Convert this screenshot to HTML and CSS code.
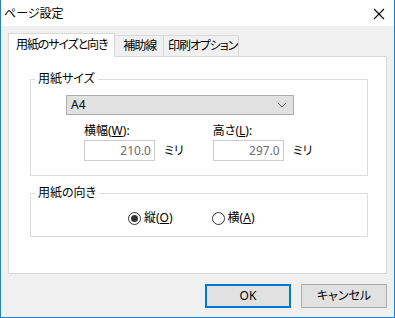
FILE: index.html
```html
<!DOCTYPE html>
<html lang="ja">
<head>
  <meta charset="UTF-8">
  <title>ページ設定</title>
  <link rel="stylesheet" href="styles.css">
</head>
<body>
  <div class="window">
    <div class="titlebar">
      <span class="title">ページ設定</span>
      <svg class="close" width="12" height="12" viewBox="0 0 12 12">
        <path d="M1 1 L11 11 M11 1 L1 11" stroke="#000" stroke-width="1.1" fill="none"/>
      </svg>
    </div>

    <div class="content">
      <div class="tabs">
        <div class="tab active">用紙のサイズと向き</div>
        <div class="tab">補助線</div>
        <div class="tab">印刷オプション</div>
      </div>

      <div class="panel">
        <fieldset class="group size-group">
          <legend>用紙サイズ</legend>
          <div class="group-body">
            <div class="select">
              <span>A4</span>
              <svg width="10" height="6" viewBox="0 0 10 6">
                <path d="M1 1 L5 5 L9 1" stroke="#555" stroke-width="1" fill="none"/>
              </svg>
            </div>
            <div class="dims">
              <div class="dim">
                <label>横幅(<u>W</u>):</label>
                <div class="dim-row">
                  <div class="num">210.0</div>
                  <span class="unit">ミリ</span>
                </div>
              </div>
              <div class="dim">
                <label>高さ(<u>L</u>):</label>
                <div class="dim-row">
                  <div class="num">297.0</div>
                  <span class="unit">ミリ</span>
                </div>
              </div>
            </div>
          </div>
        </fieldset>

        <fieldset class="group orient-group">
          <legend>用紙の向き</legend>
          <div class="radios">
            <label class="radio"><span class="dot checked"></span><span>縦(<u>O</u>)</span></label>
            <label class="radio"><span class="dot"></span><span>横(<u>A</u>)</span></label>
          </div>
        </fieldset>
      </div>

      <div class="buttons">
        <button class="btn default">OK</button>
        <button class="btn">キャンセル</button>
      </div>
    </div>
  </div>
</body>
</html>
```

FILE: styles.css
```css
body {
  margin: 0;
  font-family: "Noto Sans", "Noto Sans CJK JP", sans-serif;
  font-size: 12px;
  line-height: 16px;
  font-feature-settings: "palt";
  color: #000;
}

.window {
  width: 395px;
  height: 318px;
  box-sizing: border-box;
  background: #f0f0f0;
  border: 1px solid #1883d7;
  border-top: none;
}

.titlebar {
  height: 26px;
  background: #fff;
  display: flex;
  align-items: center;
  justify-content: space-between;
  padding: 0 9px 0 3px;
}
.title {
  margin-top: 1px;
}
.close {
  margin-top: 1px;
}

.content {
  padding: 7px 7px 0 7px;
}

.tabs {
  display: flex;
  align-items: flex-end;
  height: 23px;
}
.tab {
  height: 21px;
  line-height: 20px;
  padding: 0 5px 0 6px;
  border: 1px solid #d9d9d9;
  border-bottom: none;
  margin-left: -1px;
  box-sizing: border-box;
  white-space: nowrap;
  letter-spacing: -1.1px;
}
.tab:nth-child(2) {
  padding: 0 7px 0 8px;
}
.tab:nth-child(3) {
  padding: 0 1px 0 4px;
}
.tab.active {
  height: 24px;
  margin-left: 0;
  margin-bottom: -1px;
  padding: 0 7px 0 7px;
  background: #fff;
  position: relative;
  z-index: 1;
  line-height: 22px;
}

.panel {
  height: 218px;
  box-sizing: border-box;
  background: #fff;
  border: 1px solid #d9d9d9;
  padding: 14px 18px 0 21px;
}

.group {
  margin: 0;
  padding: 0;
  border: 1px solid #dcdcdc;
  min-width: 0;
}
.group legend {
  margin-left: 4px;
  padding: 0 3px;
  line-height: 16px;
}

.size-group {
  height: 105px;
  box-sizing: border-box;
}
.group-body {
  padding: 8px 0 0 35px;
}

.select {
  width: 228px;
  height: 20px;
  box-sizing: border-box;
  background: #e1e1e1;
  border: 1px solid #adadad;
  display: flex;
  align-items: center;
  justify-content: space-between;
  padding: 0 6px 0 4px;
}

.dims {
  display: flex;
  gap: 29px;
  margin-top: 8px;
  padding-left: 18px;
}
.dim-row {
  display: flex;
  align-items: center;
  gap: 9px;
  margin-top: 1px;
}
.num {
  width: 71px;
  height: 21px;
  box-sizing: border-box;
  border: 1px solid #ccc;
  color: #6d6d6d;
  text-align: right;
  padding: 1px 3px 0 0;
  line-height: 18px;
}

.orient-group {
  margin-top: 9px;
  height: 52px;
  box-sizing: border-box;
}
.radios {
  display: flex;
  gap: 39px;
  padding: 9px 0 0 97px;
}
.radio {
  display: flex;
  align-items: center;
  gap: 3px;
}
.dot {
  width: 13px;
  height: 13px;
  box-sizing: border-box;
  border: 1px solid #333;
  border-radius: 50%;
  display: flex;
  align-items: center;
  justify-content: center;
}
.dot.checked::after {
  content: "";
  width: 7px;
  height: 7px;
  border-radius: 50%;
  background: #333;
}

.buttons {
  display: flex;
  justify-content: flex-end;
  gap: 10px;
  margin-top: 10px;
}
.btn {
  width: 86px;
  height: 24px;
  font: inherit;
  font-feature-settings: "palt";
  background: #e1e1e1;
  border: 1px solid #adadad;
  padding: 0;
}
.btn.default {
  border: 2px solid #0078d7;
}
```
